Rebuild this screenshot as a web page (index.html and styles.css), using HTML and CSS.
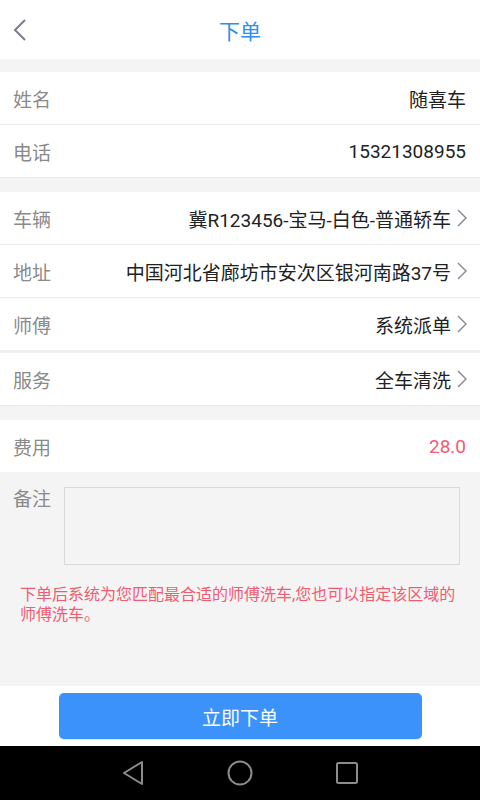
FILE: index.html
```html
<!DOCTYPE html>
<html lang="zh-CN">
<head>
    <meta charset="UTF-8">
    <meta name="viewport" content="width=device-width, initial-scale=1.0">
    <title>下单</title>
    <link rel="stylesheet" href="styles.css">
</head>
<body>
    <div class="page">
        <header class="topbar">
            <svg class="back" width="16" height="24" viewBox="0 0 16 24">
                <polyline points="13,2 3,12 13,22" fill="none" stroke="#7c7c8e" stroke-width="2"/>
            </svg>
            <h1>下单</h1>
        </header>

        <main class="content">
            <section class="group">
                <div class="row">
                    <span class="label">姓名</span>
                    <span class="value">随喜车</span>
                </div>
                <div class="row">
                    <span class="label">电话</span>
                    <span class="value">15321308955</span>
                </div>
            </section>

            <section class="group">
                <div class="row link">
                    <span class="label">车辆</span>
                    <span class="value">冀R123456-宝马-白色-普通轿车</span>
                    <svg class="arrow" width="10" height="18" viewBox="0 0 10 18"><polyline points="1,1 9,9 1,17" fill="none" stroke="#8a8a9c" stroke-width="1.5"/></svg>
                </div>
                <div class="row link">
                    <span class="label">地址</span>
                    <span class="value">中国河北省廊坊市安次区银河南路37号</span>
                    <svg class="arrow" width="10" height="18" viewBox="0 0 10 18"><polyline points="1,1 9,9 1,17" fill="none" stroke="#8a8a9c" stroke-width="1.5"/></svg>
                </div>
                <div class="row link thick">
                    <span class="label">师傅</span>
                    <span class="value">系统派单</span>
                    <svg class="arrow" width="10" height="18" viewBox="0 0 10 18"><polyline points="1,1 9,9 1,17" fill="none" stroke="#8a8a9c" stroke-width="1.5"/></svg>
                </div>
                <div class="row link">
                    <span class="label">服务</span>
                    <span class="value">全车清洗</span>
                    <svg class="arrow" width="10" height="18" viewBox="0 0 10 18"><polyline points="1,1 9,9 1,17" fill="none" stroke="#8a8a9c" stroke-width="1.5"/></svg>
                </div>
            </section>

            <section class="group">
                <div class="row last">
                    <span class="label">费用</span>
                    <span class="value price">28.0</span>
                </div>
            </section>

            <div class="remark">
                <span class="label">备注</span>
                <textarea class="remark-box"></textarea>
            </div>

            <p class="tip">下单后系统为您匹配最合适的师傅洗车,您也可以指定该区域的师傅洗车。</p>
        </main>

        <footer class="actions">
            <button class="submit" type="button">立即下单</button>
        </footer>

        <nav class="navbar">
            <svg width="24" height="26" viewBox="0 0 24 26"><polygon points="3,13 21,2 21,24" fill="none" stroke="#8c8c8c" stroke-width="2" stroke-linejoin="round"/></svg>
            <svg width="28" height="28" viewBox="0 0 28 28"><circle cx="14" cy="14" r="11.5" fill="none" stroke="#8c8c8c" stroke-width="2"/></svg>
            <svg width="24" height="24" viewBox="0 0 24 24"><rect x="2" y="2" width="20" height="20" rx="1.5" fill="none" stroke="#8c8c8c" stroke-width="2"/></svg>
        </nav>
    </div>
</body>
</html>
```

FILE: styles.css
```css
body {
    margin: 0;
    font-family: Roboto, "Noto Sans CJK SC", sans-serif;
    background-color: #f4f4f4;
}
.page {
    height: 800px;
    display: flex;
    flex-direction: column;
}
.topbar {
    height: 59px;
    background-color: #fff;
    display: flex;
    align-items: center;
    justify-content: center;
    position: relative;
}
.topbar h1 {
    margin: 0;
    font-size: 21px;
    font-weight: normal;
    color: #2a8ff0;
}
.back {
    position: absolute;
    left: 12px;
    top: 18px;
}
.content {
    flex: 1;
    display: flex;
    flex-direction: column;
}
.group {
    background-color: #fff;
    margin-top: 13px;
}
.group + .group {
    margin-top: 14px;
}
.row {
    height: 52px;
    display: flex;
    align-items: center;
    padding: 0 14px 0 13px;
    border-bottom: 1px solid #ebebeb;
}
.row.thick {
    border-bottom: 3px solid #efefef;
}
.row.last {
    border-bottom: none;
}
.row.link {
    padding-right: 13px;
}
.label {
    font-size: 19px;
    color: #8a8a8a;
}
.value {
    margin-left: auto;
    font-size: 19px;
    color: #222;
}
.price {
    color: #f15c72;
}
.arrow {
    margin-left: 6px;
}
.remark {
    display: flex;
    align-items: flex-start;
    padding: 15px 20px 0 13px;
}
.remark .label {
    line-height: 26px;
}
.remark-box {
    margin-left: 13px;
    flex: 1;
    height: 76px;
    border: 1px solid #d9d9d9;
    background-color: #f4f4f4;
    resize: none;
    padding: 0;
}
.tip {
    margin: 20px 22px 0 20px;
    font-size: 16px;
    line-height: 20px;
    color: #f15c72;
}
.actions {
    height: 60px;
    background-color: #fff;
    display: flex;
    justify-content: center;
    align-items: flex-start;
}
.submit {
    margin-top: 7px;
    width: 363px;
    height: 46px;
    border: none;
    border-radius: 5px;
    background-color: #3a92fa;
    color: #fff;
    font-family: inherit;
    font-size: 19px;
    box-shadow: 0 1px 1px rgba(0, 0, 0, 0.12);
}
.navbar {
    height: 54px;
    background-color: #000;
    display: flex;
    align-items: center;
    justify-content: center;
    gap: 81px;
}
```
